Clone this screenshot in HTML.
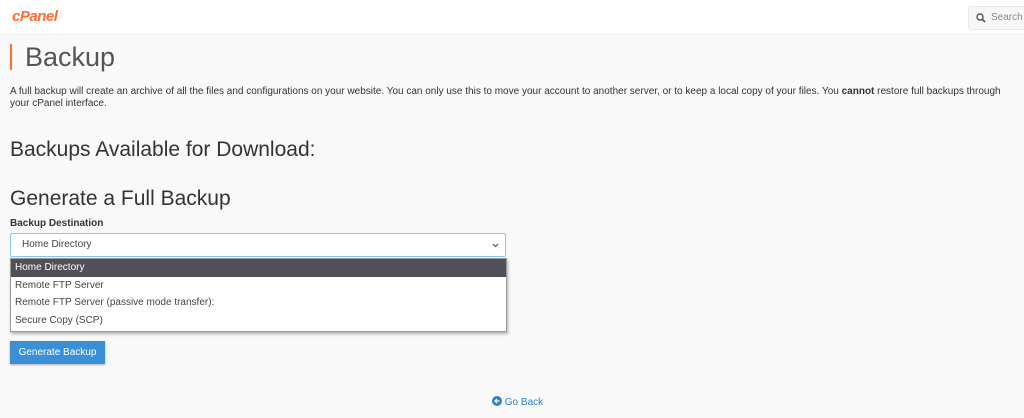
<!DOCTYPE html>
<html><head><style>
body{margin:0;width:1024px;height:418px;background:#f9f9f9;font-family:"Liberation Sans",sans-serif;overflow:hidden;position:relative;color:#333}
.top{position:absolute;left:0;top:0;width:1024px;height:34px;background:#fff;border-bottom:1px solid #eee}
.logo{position:absolute;left:12px;top:8px;color:#ff6c2c;font-weight:bold;font-style:italic;font-size:15px;letter-spacing:-0.5px}
.search{position:absolute;left:968px;top:6px;width:60px;height:22px;background:#f6f7f9;border:1px solid #e6e8ec;border-radius:3px;font-size:10px;color:#888}
.bar{position:absolute;left:10px;top:44px;width:2px;height:26px;background:#ff6c2c}
h1{position:absolute;left:25px;top:42px;margin:0;font-weight:normal;font-size:27px;color:#555}
.p{position:absolute;left:10px;top:86px;font-size:10px;line-height:12px;width:1010px;color:#333}
h2{position:absolute;margin:0;font-weight:normal;font-size:21px;color:#333;left:10px}
.lab{position:absolute;left:10px;top:218px;font-size:10px;font-weight:bold}
.sel{position:absolute;left:10px;top:233px;width:494px;height:22px;background:#fff;border:1px solid #8cc3f0;border-radius:2px;font-size:10px;line-height:22px;text-indent:11px;color:#444}
.dd{position:absolute;left:10px;top:258px;width:495px;height:72px;background:#fff;border:1px solid #999;box-shadow:1px 2px 3px rgba(0,0,0,.3);font-size:10px;color:#444}
.dd div{height:17.5px;line-height:17.5px;padding-left:4px}
.btn{position:absolute;left:10px;top:341px;width:95px;height:23px;background:#3b8fd6;color:#fff;font-size:10px;line-height:23px;text-align:center;box-shadow:0 1px 2px rgba(0,0,0,.3)}
.back{position:absolute;left:492px;top:396px;font-size:10px;color:#2f7fc7}
</style></head><body>
<div class="top"><div class="logo">cPanel</div>
<div class="search"><svg style="position:absolute;left:7px;top:6px" width="10" height="10" viewBox="0 0 10 10"><circle cx="4" cy="4" r="3" fill="none" stroke="#555" stroke-width="1.4"/><path d="M6 6l3 3" stroke="#555" stroke-width="1.6"/></svg><span style="position:absolute;left:22px;top:5px">Search</span></div></div>
<div class="bar"></div><h1>Backup</h1>
<div class="p">A full backup will create an archive of all the files and configurations on your website. You can only use this to move your account to another server, or to keep a local copy of your files. You <b>cannot</b> restore full backups through your cPanel interface.</div>
<h2 style="top:138px">Backups Available for Download:</h2>
<h2 style="top:187px">Generate a Full Backup</h2>
<div class="lab">Backup Destination</div>
<div class="sel">Home Directory<svg style="position:absolute;right:6px;top:9px" width="7" height="5" viewBox="0 0 7 5"><path d="M1 1l2.5 2.5L6 1" fill="none" stroke="#555" stroke-width="1.2"/></svg></div>
<div class="dd"><div style="background:#505058;color:#fff">Home Directory</div><div>Remote FTP Server</div><div>Remote FTP Server (passive mode transfer):</div><div>Secure Copy (SCP)</div></div>
<div class="btn">Generate Backup</div>
<div class="back"><svg width="10" height="10" viewBox="0 0 10 10" style="vertical-align:-1px"><circle cx="5" cy="5" r="5" fill="#2f7fc7"/><path d="M7.5 5H3M5 3L3 5l2 2" fill="none" stroke="#fff" stroke-width="1.3"/></svg> Go Back</div>
</body></html>
